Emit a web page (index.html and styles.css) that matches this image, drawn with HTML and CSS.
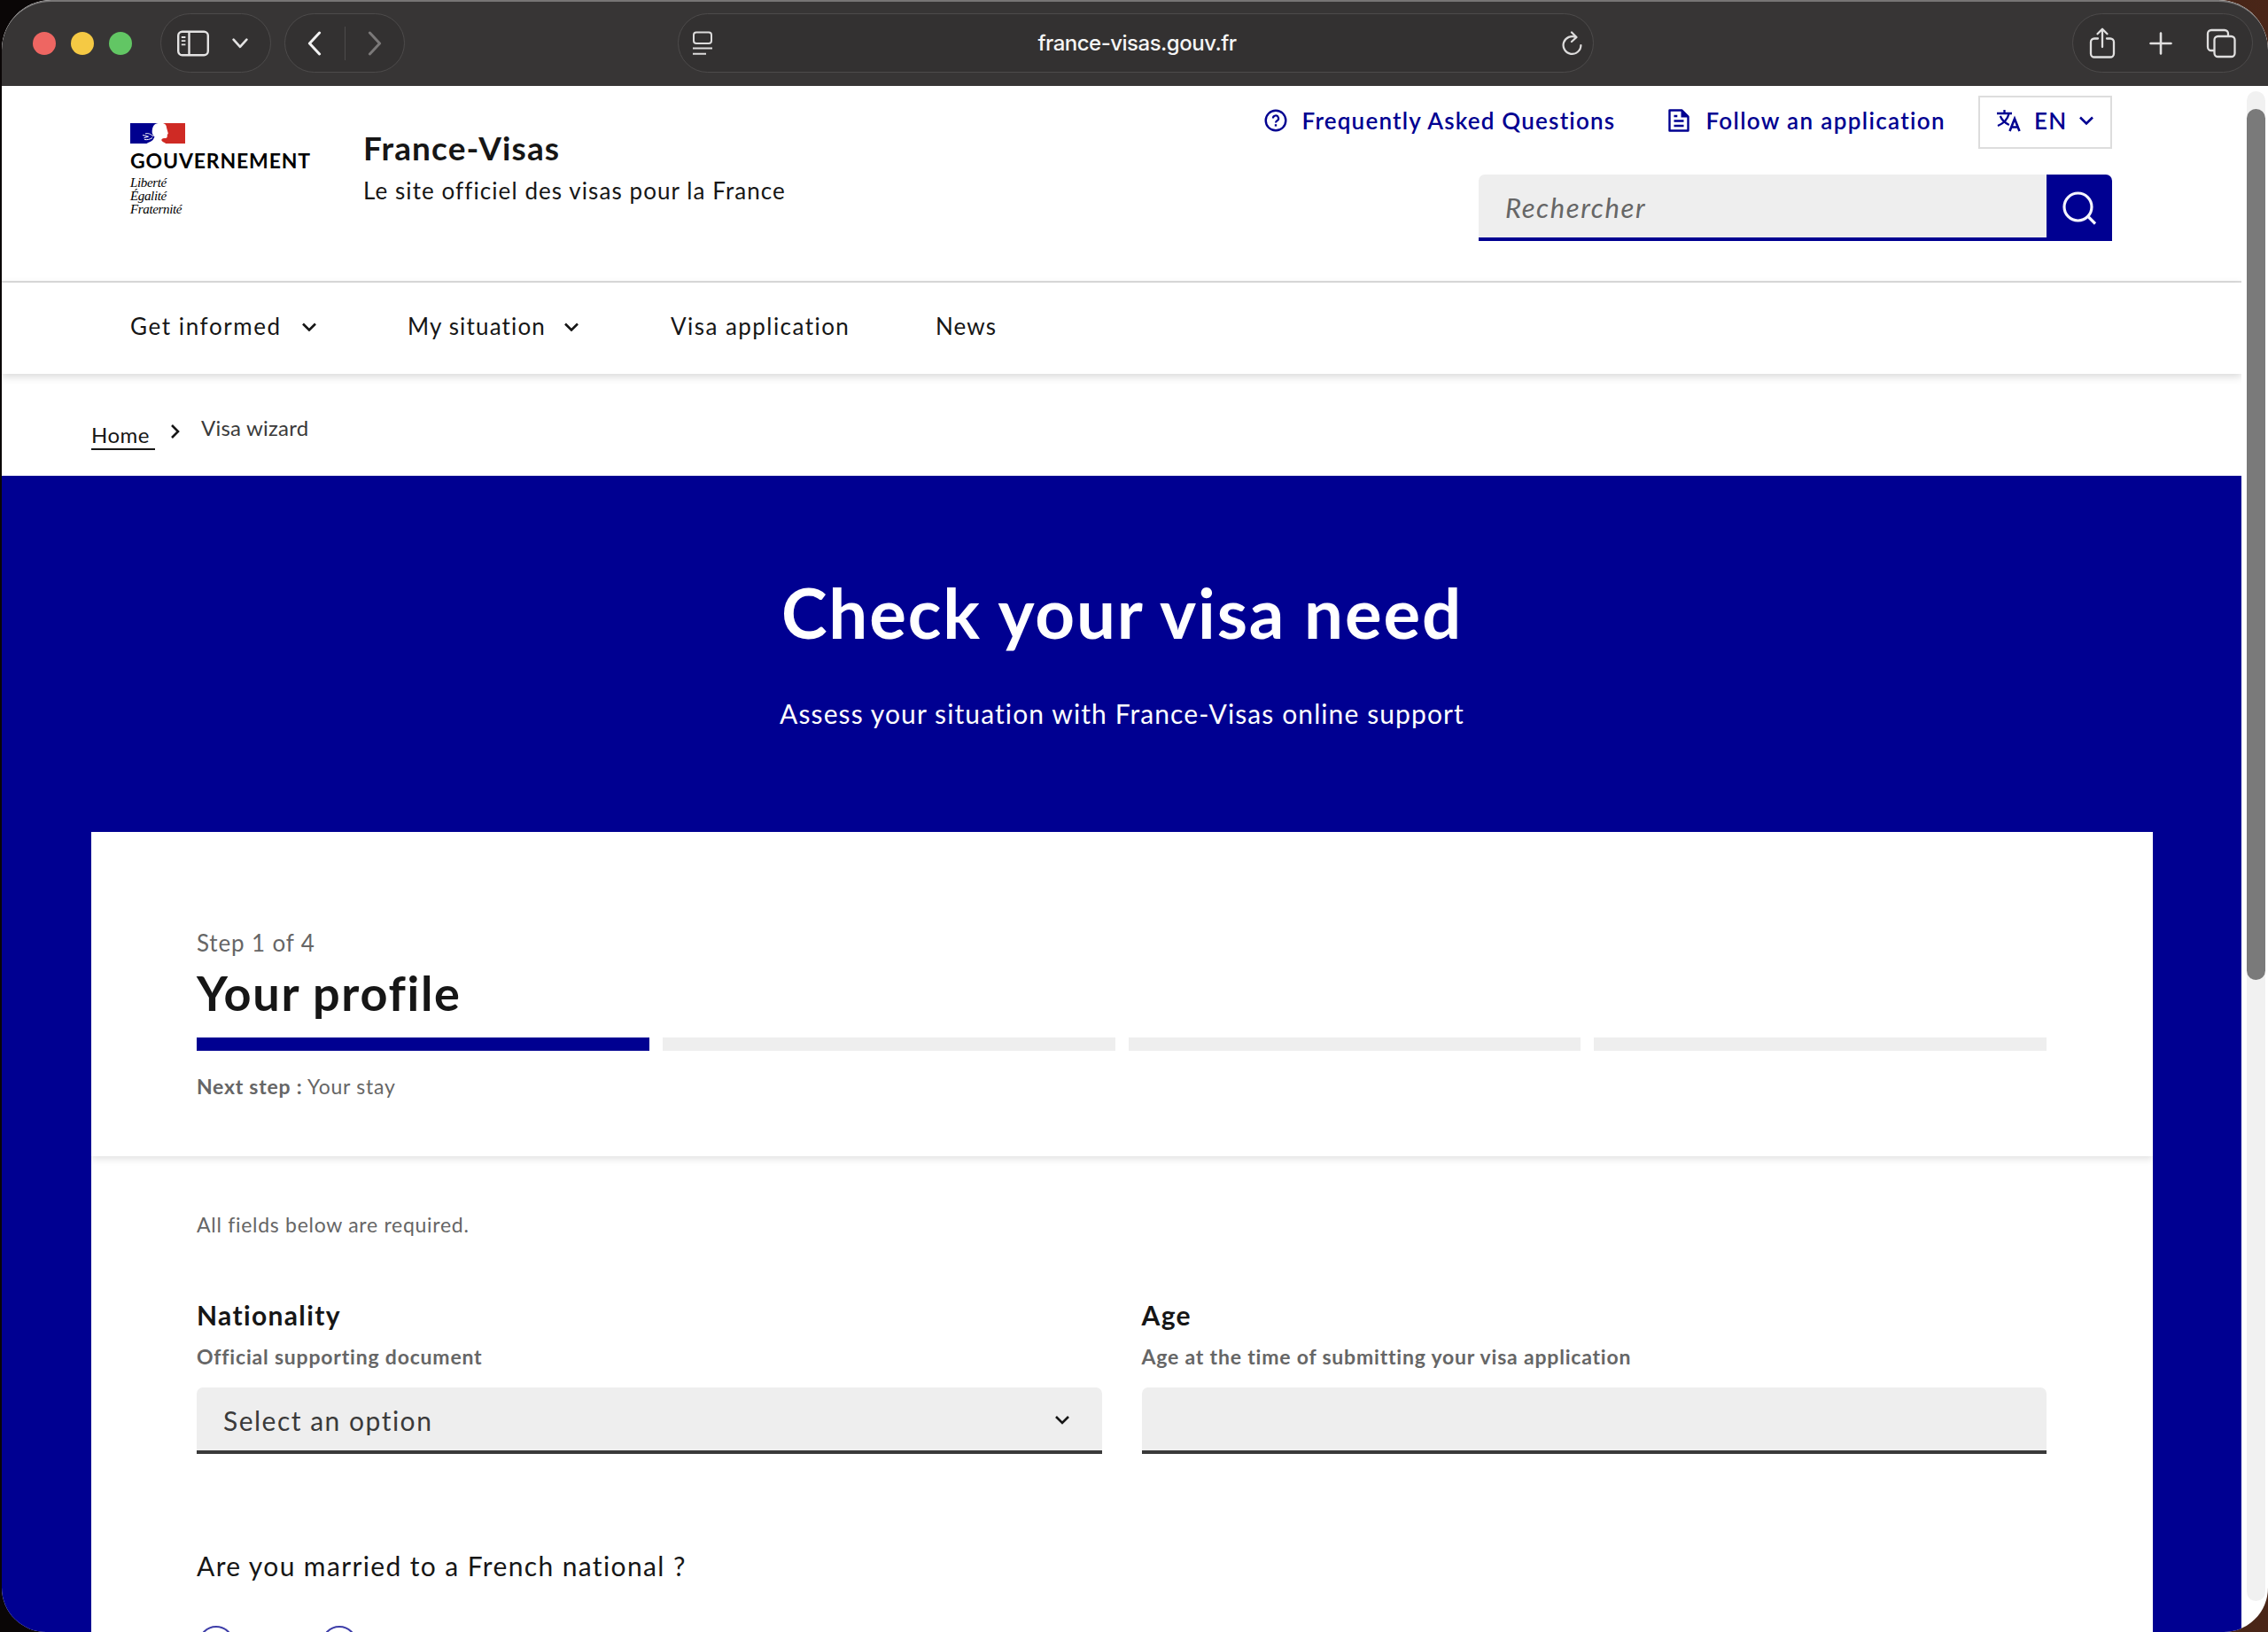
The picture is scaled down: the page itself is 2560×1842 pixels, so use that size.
FILE: index.html
```html
<!DOCTYPE html>
<html lang="en">
  <head>
    <meta charset="UTF-8" />
    <meta name="viewport" content="width=device-width, initial-scale=1.0" />
    <title>Visa wizard - France-Visas</title>
    <link rel="stylesheet" href="styles.css">
  </head>
  <body>
    <div class="window">
      <div class="toolbar">
        <div class="lights">
          <span class="light red"></span>
          <span class="light yellow"></span>
          <span class="light green"></span>
        </div>
        <div class="pill sidebarPill">
          <svg width="36" height="30" viewBox="0 0 36 30" fill="none" stroke="#e4e3e3" stroke-width="2.4">
            <rect x="1.2" y="1.7" width="33.6" height="26.6" rx="4.5" />
            <path d="M13.5 2v26" />
            <path d="M4.8 8h4.6M4.8 12.2h4.6M4.8 16.4h4.6" stroke-width="1.8" />
          </svg>
          <svg width="18" height="12" viewBox="0 0 18 12" fill="none" stroke="#e4e3e3" stroke-width="2.6" stroke-linecap="round" stroke-linejoin="round">
            <path d="M1.6 1.6 9 9.8l7.4-8.2" />
          </svg>
        </div>
        <div class="pill historyPill">
          <svg width="16" height="28" viewBox="0 0 16 28" fill="none" stroke="#f2f2f2" stroke-width="3" stroke-linecap="round" stroke-linejoin="round">
            <path d="M13.6 2 2.4 14l11.2 12" />
          </svg>
          <span class="pillDivider"></span>
          <svg width="16" height="28" viewBox="0 0 16 28" fill="none" stroke="#7b7979" stroke-width="3" stroke-linecap="round" stroke-linejoin="round">
            <path d="M2.4 2l11.2 12L2.4 26" />
          </svg>
        </div>
        <div class="pill addressPill">
          <svg width="22" height="28" viewBox="0 0 22 28" fill="none" stroke="#dddcdc" stroke-width="2">
            <rect x="1" y="1.5" width="20" height="12.5" rx="3" />
            <path d="M0 19.5h22M0 25.8h15" />
          </svg>
          <span class="address">france-visas.gouv.fr</span>
          <svg width="24" height="28" viewBox="0 0 24 28" fill="none" stroke="#dddcdc" stroke-width="2.2" stroke-linecap="round" stroke-linejoin="round">
            <path d="M16 7.2a9.9 9.9 0 1 0 5.4 8.800" />
            <path d="M11 1.5l5.5 5.5-5.5 5" />
          </svg>
        </div>
        <div class="pill actionsPill">
          <svg width="30" height="36" viewBox="0 0 30 36" fill="none" stroke="#e0dfdf" stroke-width="2.3" stroke-linecap="round" stroke-linejoin="round">
            <path d="M10 12.5H6a4 4 0 0 0-4 4v13a4 4 0 0 0 4 4h18a4 4 0 0 0 4-4v-13a4 4 0 0 0-4-4h-4" />
            <path d="M15 22V2M9.5 7.3 15 1.8l5.5 5.5" />
          </svg>
          <svg width="26" height="26" viewBox="0 0 26 26" fill="none" stroke="#e0dfdf" stroke-width="2.6" stroke-linecap="round">
            <path d="M13 1.5v23M1.5 13h23" />
          </svg>
          <svg width="34" height="34" viewBox="0 0 34 34" fill="none" stroke="#e0dfdf" stroke-width="2.3">
            <rect x="9.5" y="9" width="23" height="23" rx="4" />
            <path d="M9.5 25H6a4 4 0 0 1-4-4V6a4 4 0 0 1 4-4h15a4 4 0 0 1 4 4v3" />
          </svg>
        </div>
      </div>

      <div class="viewport">
        <div class="page">
          <header class="header">
            <div class="brand">
              <div class="logo">
                <svg class="flag" width="62" height="23" viewBox="0 0 62 23">
                  <rect width="31" height="23" fill="#00008f" />
                  <rect x="31" width="31" height="23" fill="#cf2a24" />
                  <path d="M18.5 23c2-1.500 5-2 7-4l2-3.500c-2-1.500-3.200-4-2.800-7C25.200 4 27 0 32 0h5c2.500.6 4 2.500 4 5l1.800 6.500c0 .8-1.200 1-1 1.800.2 2.200-.3 3.700-2 3.700-2 0-4.300.2-4.600 2 .3 1.800 3.300 2.700 5 4z" fill="#fff" />
                  <path d="M14 13.5l6.5 1.700-5 1.600M17 12c3-1 6 0 9 3M16 18.500c3 .5 6 0 9-2" fill="none" stroke="#fff" stroke-width="1" />
                </svg>
                <div class="logoName">GOUVERNEMENT</div>
                <div class="motto">Liberté<br>Égalité<br>Fraternité</div>
              </div>
              <div class="service">
                <div class="serviceTitle">France-Visas</div>
                <div class="serviceTagline">Le site officiel des visas pour la France</div>
              </div>
            </div>
            <div class="tools">
              <div class="toolLinks">
                <a class="toolLink faqLink">
                  <svg width="26" height="26" viewBox="0 0 26 26" fill="none" stroke="#000091" stroke-width="2.4">
                    <circle cx="13" cy="13" r="11.3" />
                    <path d="M9.9 10.6a3.1 3.1 0 1 1 4.6 2.7c-1 .6-1.5 1-1.5 2.2" stroke-width="2.2" />
                    <path d="M13 17.2v2.4" />
                  </svg>
                  <span>Frequently Asked Questions</span>
                </a>
                <a class="toolLink followLink">
                  <svg width="24" height="26" viewBox="0 0 24 26" fill="none" stroke="#000091" stroke-width="2.4">
                    <path d="M1.5 1.5h14l7 7v16h-21z" stroke-linejoin="round" />
                    <path d="M14.5 1l8.5 8.5h-8.5z" fill="#000091" stroke="none" />
                    <path d="M6.5 8h3.8M6.5 13.5h11M6.5 19h11" />
                  </svg>
                  <span>Follow an application</span>
                </a>
                <div class="lang">
                  <svg width="28" height="26" viewBox="0 0 28 26" fill="none" stroke="#000091" stroke-width="2.3">
                    <path d="M0 5h17M8.5 1v4M3.800 8c2 5 6 8 10 10M13.500 5.500C12 12 7 16.500 1 19" />
                    <path d="M14.5 25l5.5-14 5.5 14M16.600 20.500h7" stroke-width="2.6" />
                  </svg>
                  <span class="langCode">EN</span>
                  <svg class="chevron" width="18" height="12" viewBox="0 0 18 12">
                    <path d="M2 2.500 9 9.500l7-7" />
                  </svg>
                </div>
              </div>
              <div class="search">
                <div class="searchInput">Rechercher</div>
                <div class="searchButton">
                  <svg width="40" height="40" viewBox="0 0 40 40" fill="none" stroke="#f5f5fe" stroke-width="3.2">
                    <circle cx="18.5" cy="18.5" r="15.5" />
                    <path d="M29.5 29l8.500 8.500" />
                  </svg>
                </div>
              </div>
            </div>
          </header>

          <nav class="nav">
            <a class="navItem informed">
              <span>Get informed</span>
              <svg class="chevron" width="18" height="12" viewBox="0 0 18 12"><path d="M2 3.500 9 10.500l7-7" /></svg>
            </a>
            <a class="navItem situation">
              <span>My situation</span>
              <svg class="chevron" width="18" height="12" viewBox="0 0 18 12"><path d="M2 3.500 9 10.500l7-7" /></svg>
            </a>
            <a class="navItem application">Visa application</a>
            <a class="navItem">News</a>
          </nav>

          <div class="breadcrumb">
            <a class="crumbHome">Home</a>
            <svg class="chevron crumbArrow" width="12" height="18" viewBox="0 0 12 18"><path d="M2 2l7 7-7 7" /></svg>
            <span class="crumbCurrent">Visa wizard</span>
          </div>

          <main class="hero">
            <h1>Check your visa need</h1>
            <p class="lead">Assess your situation with France-Visas online support</p>

            <div class="card">
              <div class="stepper">
                <div class="stepCount">Step 1 of 4</div>
                <h2>Your profile</h2>
                <div class="steps">
                  <span class="step active"></span>
                  <span class="step"></span>
                  <span class="step"></span>
                  <span class="step"></span>
                </div>
                <div class="nextStep"><b>Next step :</b> Your stay</div>
              </div>
              <div class="form">
                <div class="required">All fields below are required.</div>
                <div class="fields">
                  <div class="field">
                    <div class="label">Nationality</div>
                    <div class="hint">Official supporting document</div>
                    <div class="input">
                      <span>Select an option</span>
                      <svg class="chevron" width="18" height="12" viewBox="0 0 18 12"><path d="M2 2 9 9l7-7" /></svg>
                    </div>
                  </div>
                  <div class="field">
                    <div class="label">Age</div>
                    <div class="hint">Age at the time of submitting your visa application</div>
                    <div class="input"></div>
                  </div>
                </div>
                <div class="question">Are you married to a French national ?</div>
                <div class="radios">
                  <span class="radio"></span>
                  <span class="radio"></span>
                </div>
              </div>
            </div>
          </main>
        </div>
        <div class="scrollbar">
          <div class="track">
            <div class="thumb"></div>
          </div>
        </div>
      </div>
    </div>
  </body>
</html>
```
FILE: styles.css
```css
* {
  box-sizing: border-box;
}
html {
  overflow: hidden;
}
body {
  margin: 0;
  height: 1842px;
  padding-left: 2px;
  overflow: hidden;
  background: linear-gradient(90deg, #0a0606 0, #0a0606 60%, #4a2618 100%);
  font-family: Lato, sans-serif;
  color: #161616;
}
svg {
  display: block;
  flex: none;
}
h1,
h2,
p {
  margin: 0;
}
.window {
  height: 1842px;
  display: flex;
  flex-direction: column;
  overflow: hidden;
  border-radius: 56px 56px 50px 50px;
  background: #fff;
}

/* browser toolbar */
.toolbar {
  height: 97px;
  flex: none;
  display: flex;
  align-items: center;
  border-top: 2px solid #777575;
  border-radius: 56px 56px 0 0;
  background: #373535;
  padding: 0 17px 2px 35px;
}
.lights {
  display: flex;
  gap: 17px;
}
.light {
  width: 26px;
  height: 26px;
  border-radius: 50%;
}
.red {
  background: #ee6662;
}
.yellow {
  background: #f5c944;
}
.green {
  background: #62c664;
}
.pill {
  height: 67px;
  display: flex;
  align-items: center;
  border: 1.5px solid #4d4b4b;
  border-radius: 34px;
  background: #333131;
}
.sidebarPill {
  width: 125px;
  margin-left: 32px;
  padding-left: 18px;
  gap: 26px;
}
.historyPill {
  width: 136px;
  margin-left: 15px;
  padding: 0 25px;
  justify-content: space-between;
}
.pillDivider {
  width: 1px;
  height: 38px;
  background: #4d4b4b;
}
.addressPill {
  width: 1034px;
  margin-left: 308px;
  padding: 0 11px 0 16px;
  justify-content: space-between;
}
.address {
  font-family: Inter, sans-serif;
  font-size: 24px;
  font-weight: 500;
  letter-spacing: -0.5px;
  color: #f5f5f5;
}
.actionsPill {
  width: 204px;
  margin-left: auto;
  padding: 0 18px;
  justify-content: space-between;
}

.viewport {
  flex: 1;
  min-height: 0;
  display: flex;
}
.page {
  width: 2528px;
  flex: none;
  overflow: hidden;
}
.scrollbar {
  flex: 1;
  padding: 6px 3px 35px 6px;
}
.track {
  height: 100%;
  padding-top: 20px;
  border-radius: 11px;
  background: #f1f1f1;
}
.thumb {
  height: 983px;
  border-radius: 11px;
  background: #7a7a7a;
}

/* site header */
.header {
  height: 222px;
  display: flex;
  justify-content: space-between;
  padding: 11px 146px 0 145px;
  border-bottom: 2px solid #ddd;
}
.brand {
  display: flex;
}
.logo {
  width: 263px;
  padding-top: 31px;
  color: #000;
}
.logoName {
  margin-top: 3px;
  font-size: 23px;
  line-height: 32px;
  font-weight: 700;
  letter-spacing: 0.85px;
}
.motto {
  margin-top: 2px;
  font-family: "Liberation Serif", serif;
  font-size: 15px;
  line-height: 15px;
  font-style: italic;
  letter-spacing: -0.35px;
}
.serviceTitle {
  margin-top: 36px;
  font-size: 37px;
  line-height: 45px;
  font-weight: 700;
  letter-spacing: 1.1px;
}
.serviceTagline {
  margin-top: 6px;
  font-size: 26px;
  line-height: 40px;
  letter-spacing: 1.08px;
}
.tools {
  display: flex;
  flex-direction: column;
  align-items: flex-end;
}
.toolLinks {
  display: flex;
  height: 60px;
  color: #000091;
  font-size: 26px;
  font-weight: 600;
  letter-spacing: 1.2px;
}
.toolLink {
  display: flex;
  align-items: center;
  padding-bottom: 4px;
}
.faqLink {
  gap: 17px;
  margin-right: 60px;
}
.followLink {
  gap: 18px;
  margin-right: 37px;
  letter-spacing: 1.35px;
}
.lang {
  width: 151px;
  display: flex;
  align-items: center;
  padding: 0 18px 4px 19px;
  border: 2px solid #ddd;
}
.langCode {
  margin-left: 14px;
  margin-right: auto;
}
.chevron {
  fill: none;
  stroke: #161616;
  stroke-width: 2.6;
}
.lang .chevron {
  stroke: #000091;
}
.search {
  display: flex;
  width: 715px;
  margin-top: 29px;
}
.searchInput {
  flex: 1;
  height: 75px;
  padding-left: 30px;
  border-bottom: 4px solid #000091;
  border-radius: 7px 0 0 0;
  background: #eee;
  color: #666;
  font-size: 31px;
  font-style: italic;
  line-height: 75px;
  letter-spacing: 1.6px;
}
.searchButton {
  width: 74px;
  height: 75px;
  display: flex;
  align-items: center;
  justify-content: center;
  border-radius: 0 7px 0 0;
  background: #000091;
}

/* main navigation */
.nav {
  position: relative;
  height: 103px;
  display: flex;
  align-items: center;
  padding: 0 145px 6px;
  font-size: 26px;
  letter-spacing: 1.15px;
  box-shadow: 0 3px 9px rgba(0, 0, 0, 0.16);
}
.navItem {
  display: flex;
  align-items: center;
  justify-content: space-between;
}
.informed {
  width: 211px;
  margin-right: 102px;
  letter-spacing: 1.6px;
}
.situation {
  width: 194px;
  margin-right: 103px;
}
.application {
  width: 299px;
  letter-spacing: 1.45px;
}

.breadcrumb {
  height: 115px;
  display: flex;
  align-items: flex-start;
  padding: 46px 101px 0;
  font-size: 24px;
  line-height: 30px;
  letter-spacing: 0.2px;
}
.crumbHome {
  width: 72px;
  margin-top: 8px;
  border-bottom: 2px solid #161616;
  letter-spacing: 0.5px;
}
.crumbArrow {
  margin: 10px 23px 0 17px;
}
.crumbCurrent {
  color: #3a3a3a;
}

/* hero and wizard card */
.hero {
  height: 1400px;
  padding: 108px 100px 0 101px;
  background: #000091;
  color: #fff;
  text-align: center;
}
h1 {
  font-size: 78px;
  line-height: 92px;
  letter-spacing: 1.85px;
}
.lead {
  margin-top: 48px;
  font-size: 30px;
  line-height: 40px;
  letter-spacing: 1.1px;
}
.card {
  height: 1100px;
  margin-top: 114px;
  background: #fff;
  color: #161616;
  text-align: left;
}
.stepper {
  height: 366px;
  padding: 105px 120px 0 119px;
  box-shadow: 0 3px 8px rgba(0, 0, 0, 0.12);
  clip-path: inset(0 0 -16px 0);
}
.stepCount {
  color: #666;
  font-size: 26px;
  line-height: 40px;
  letter-spacing: 0.85px;
}
h2 {
  margin-top: 5px;
  font-size: 54px;
  line-height: 64px;
  letter-spacing: 1.7px;
}
.steps {
  display: grid;
  grid-template-columns: repeat(4, 1fr);
  gap: 15px;
  margin-top: 18px;
}
.step {
  height: 15px;
  background: #eee;
}
.active {
  background: #000091;
}
.nextStep {
  margin-top: 23px;
  color: #666;
  font-size: 23px;
  line-height: 34px;
  letter-spacing: 0.75px;
}
.form {
  padding: 60px 120px 0 119px;
}
.required {
  color: #666;
  font-size: 23px;
  line-height: 34px;
  letter-spacing: 0.72px;
}
.fields {
  display: grid;
  grid-template-columns: 1fr 1fr;
  gap: 45px;
  margin-top: 65px;
}
.label {
  font-size: 30px;
  line-height: 40px;
  font-weight: 700;
  letter-spacing: 1.35px;
}
.hint {
  margin-top: 10px;
  color: #666;
  font-size: 23px;
  line-height: 34px;
  font-weight: 700;
  letter-spacing: 0.8px;
}
.input {
  height: 75px;
  display: flex;
  align-items: center;
  justify-content: space-between;
  margin-top: 18px;
  padding: 2px 36px 0 30px;
  border-bottom: 4px solid #3a3a3a;
  border-radius: 7px 7px 0 0;
  background: #eee;
  color: #3a3a3a;
  font-size: 30px;
  letter-spacing: 1.5px;
}
.question {
  margin-top: 106px;
  font-size: 30px;
  line-height: 40px;
  letter-spacing: 1.38px;
}
.radios {
  display: flex;
  gap: 99px;
  margin-top: 48px;
  padding-left: 2px;
}
.radio {
  width: 40px;
  height: 40px;
  border: 2px solid #3d3da8;
  border-radius: 50%;
}
```
